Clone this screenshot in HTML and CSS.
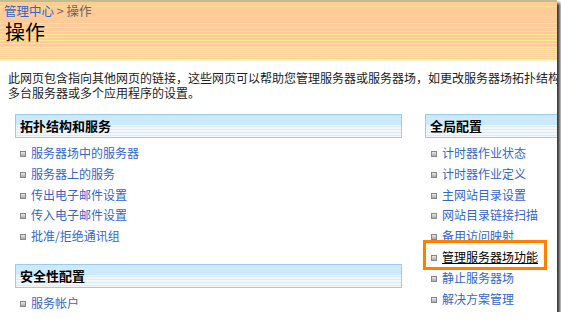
FILE: index.html
```html
<!DOCTYPE html>
<html>
<head>
    <meta charset="utf-8">
    <title>操作</title>
    <link rel="stylesheet" href="styles.css">
</head>
<body>
    <div class="page">
        <div class="crumb"><a href="#">管理中心</a> &gt; 操作</div>
        <div class="title">操作</div>
        <div class="desc">此网页包含指向其他网页的链接，这些网页可以帮助您管理服务器或服务器场，如更改服务器场拓扑结构、指定服务以及更改影响<br>多台服务器或多个应用程序的设置。</div>
        <div class="cols">
            <div class="col left">
                <div class="sechead">拓扑结构和服务</div>
                <ul class="links">
                    <li><a href="#">服务器场中的服务器</a></li>
                    <li><a href="#">服务器上的服务</a></li>
                    <li><a href="#">传出电子邮件设置</a></li>
                    <li><a href="#">传入电子邮件设置</a></li>
                    <li><a href="#">批准/拒绝通讯组</a></li>
                </ul>
                <div class="sechead second">安全性配置</div>
                <ul class="links">
                    <li><a href="#">服务帐户</a></li>
                </ul>
            </div>
            <div class="col right">
                <div class="sechead">全局配置</div>
                <ul class="links">
                    <li><a href="#">计时器作业状态</a></li>
                    <li><a href="#">计时器作业定义</a></li>
                    <li><a href="#">主网站目录设置</a></li>
                    <li><a href="#">网站目录链接扫描</a></li>
                    <li><a href="#">备用访问映射</a></li>
                    <li><a href="#" class="hot">管理服务器场功能</a></li>
                    <li><a href="#">静止服务器场</a></li>
                    <li><a href="#">解决方案管理</a></li>
                </ul>
            </div>
        </div>
        <div class="mark"></div>
    </div>
</body>
</html>
```

FILE: styles.css
```css
body {
    margin: 0;
    background: #fff;
    font-family: "Noto Sans CJK SC", "DejaVu Sans", sans-serif;
    font-size: 12px;
    color: #222;
}

.page {
    position: relative;
    width: 557px;
    height: 312px;
    overflow: hidden;
    background: #fff;
    box-shadow: 3px 3px 3px 0 rgba(0, 0, 0, 0.8);
}

a {
    color: #3366cc;
    text-decoration: none;
}

.crumb {
    height: 18px;
    line-height: 18px;
    padding-left: 4px;
    border-top: 2px solid #c2bc8e;
    background: linear-gradient(#ffcc99 0 4px, #ffe08a 4px 5px, #ffcc99 5px);
    color: #666;
    font-size: 12.5px;
    white-space: nowrap;
}

.title {
    height: 40px;
    line-height: 24px;
    padding-left: 5px;
    font-size: 20px;
    color: #000;
    background:
        repeating-linear-gradient(#ffcc99 0 3px, #ffe98f 3px 4px) 0 0 / 100% 12px no-repeat,
        repeating-linear-gradient(#ffcc99 0 2px, #ffe98f 2px 3px) 0 12px / 100% 14px no-repeat,
        repeating-linear-gradient(#ffd59a 0 1px, #ffec90 1px 2px) 0 26px / 100% 14px no-repeat;
}

.desc {
    width: 640px;
    padding: 9px 0 0 8px;
    line-height: 15px;
    white-space: nowrap;
    color: #222;
    border-top: 1px solid #fff7cc;
}

.cols {
    display: flex;
    gap: 23px;
    padding: 14px 0 0 15px;
}

.col {
    flex-shrink: 0;
}

.col.left {
    width: 387px;
}

.col.right {
    width: 200px;
}

.sechead {
    height: 22px;
    line-height: 22px;
    padding-left: 4px;
    border: 1px solid #99ccf5;
    font-size: 13px;
    font-weight: bold;
    color: #000;
    background:
        linear-gradient(#cdeafd 0 10px, transparent 10px),
        repeating-linear-gradient(#f4f6f8 0 2px, #d9ecfa 2px 3px);
}

.sechead.second {
    margin-top: 17px;
}

.links {
    list-style: none;
    margin: 5px 0 0;
    padding: 0 0 0 5px;
}

.col.right .links {
    padding-left: 6px;
}

.links li {
    line-height: 20.8px;
    white-space: nowrap;
}

.links li::before {
    content: "";
    display: inline-block;
    width: 4px;
    height: 4px;
    margin-right: 5px;
    vertical-align: 1px;
    border: 1px solid #888;
    background: linear-gradient(#e8e8e8, #aaa);
}

.links a.hot {
    color: #000;
    text-decoration: underline;
}

.mark {
    position: absolute;
    left: 423px;
    top: 240px;
    width: 124px;
    height: 30px;
    box-sizing: border-box;
    border: 3px solid #ff8000;
}
```
